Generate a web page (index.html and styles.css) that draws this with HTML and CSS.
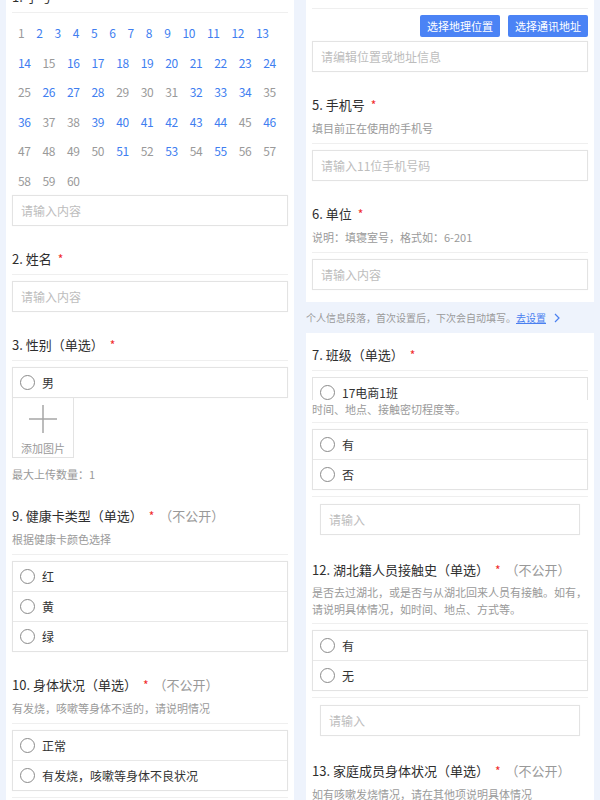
FILE: index.html
```html
<!DOCTYPE html>
<html lang="zh-CN">
<head>
<meta charset="utf-8">
<title>表单</title>
<link rel="stylesheet" href="styles.css">
</head>
<body>
<div class="page">
  <div class="col col-left">
    <div class="card card-left">
      <div class="q">
        <div class="q-head"><div class="q-title">1. 学号<span class="star">*</span></div></div>
        <div class="q-body">
          <div class="nums">
            <span class="g">1</span><span class="b">2</span><span class="b">3</span><span class="b">4</span><span class="b">5</span><span class="b">6</span><span class="b">7</span><span class="b">8</span><span class="b">9</span><span class="b">10</span><span class="b">11</span><span class="b">12</span><span class="b">13</span>
            <span class="b">14</span><span class="g">15</span><span class="b">16</span><span class="b">17</span><span class="b">18</span><span class="b">19</span><span class="b">20</span><span class="b">21</span><span class="b">22</span><span class="b">23</span><span class="b">24</span>
            <span class="g">25</span><span class="b">26</span><span class="b">27</span><span class="b">28</span><span class="g">29</span><span class="g">30</span><span class="g">31</span><span class="b">32</span><span class="b">33</span><span class="b">34</span><span class="g">35</span>
            <span class="b">36</span><span class="g">37</span><span class="g">38</span><span class="b">39</span><span class="b">40</span><span class="b">41</span><span class="b">42</span><span class="b">43</span><span class="b">44</span><span class="g">45</span><span class="b">46</span>
            <span class="g">47</span><span class="g">48</span><span class="g">49</span><span class="g">50</span><span class="b">51</span><span class="g">52</span><span class="b">53</span><span class="g">54</span><span class="b">55</span><span class="g">56</span><span class="g">57</span>
            <span class="g">58</span><span class="g">59</span><span class="g">60</span>
          </div>
          <div class="input">请输入内容</div>
        </div>
      </div>

      <div class="q">
        <div class="q-head"><div class="q-title">2. 姓名<span class="star">*</span></div></div>
        <div class="q-body"><div class="input">请输入内容</div></div>
      </div>

      <div class="q">
        <div class="q-head"><div class="q-title">3. 性别（单选）<span class="star">*</span></div></div>
        <div class="q-body">
          <div class="opts">
            <div class="opt"><span class="radio"></span>男</div>
          </div>
          <div class="upload">
            <svg class="plus" width="28" height="28" viewBox="0 0 28 28"><path d="M14 0V28M0 14H28" stroke="#a6a6a6" stroke-width="1.5" fill="none"/></svg>
            <div class="upload-label">添加图片</div>
          </div>
          <div class="note">最大上传数量：1</div>
        </div>
      </div>

      <div class="q">
        <div class="q-head">
          <div class="q-title">9. 健康卡类型（单选）<span class="star">*</span><span class="private">（不公开）</span></div>
          <div class="desc">根据健康卡颜色选择</div>
        </div>
        <div class="q-body">
          <div class="opts">
            <div class="opt"><span class="radio"></span>红</div>
            <div class="opt"><span class="radio"></span>黄</div>
            <div class="opt"><span class="radio"></span>绿</div>
          </div>
        </div>
      </div>

      <div class="q">
        <div class="q-head">
          <div class="q-title">10. 身体状况（单选）<span class="star">*</span><span class="private">（不公开）</span></div>
          <div class="desc">有发烧，咳嗽等身体不适的，请说明情况</div>
        </div>
        <div class="q-body">
          <div class="opts">
            <div class="opt"><span class="radio"></span>正常</div>
            <div class="opt"><span class="radio"></span>有发烧，咳嗽等身体不良状况</div>
          </div>
          <div class="other"><div class="input">请输入</div></div>
        </div>
      </div>
    </div>
  </div>

  <div class="col col-right">
    <div class="card card-top">
      <div class="q">
        <div class="q-head"><div class="q-title">4. 住址<span class="star">*</span></div></div>
        <div class="q-body">
          <div class="btns">
            <div class="btn">选择地理位置</div>
            <div class="btn">选择通讯地址</div>
          </div>
          <div class="input">请编辑位置或地址信息</div>
        </div>
      </div>

      <div class="q">
        <div class="q-head">
          <div class="q-title">5. 手机号<span class="star">*</span></div>
          <div class="desc">填目前正在使用的手机号</div>
        </div>
        <div class="q-body"><div class="input">请输入11位手机号码</div></div>
      </div>

      <div class="q">
        <div class="q-head">
          <div class="q-title">6. 单位<span class="star">*</span></div>
          <div class="desc">说明：填寝室号，格式如：6-201</div>
        </div>
        <div class="q-body"><div class="input">请输入内容</div></div>
      </div>
    </div>

    <div class="tip">个人信息段落，首次设置后，下次会自动填写。<span class="tip-link">去设置</span><svg class="chev" width="6" height="10" viewBox="0 0 6 10"><path d="M1 1L5 5L1 9" stroke="#4a80f0" stroke-width="1.2" fill="none"/></svg></div>

    <div class="card card-bottom">
      <div class="q">
        <div class="q-head"><div class="q-title">7. 班级（单选）<span class="star">*</span></div></div>
        <div class="q-body">
          <div class="opts cut">
            <div class="opt"><span class="radio"></span>17电商1班</div>
          </div>
        </div>
      </div>

      <div class="q q-stitch">
        <div class="q-head"><div class="desc">时间、地点、接触密切程度等。</div></div>
        <div class="q-body">
          <div class="opts">
            <div class="opt"><span class="radio"></span>有</div>
            <div class="opt"><span class="radio"></span>否</div>
          </div>
          <div class="other"><div class="input">请输入</div></div>
        </div>
      </div>

      <div class="q">
        <div class="q-head">
          <div class="q-title">12. 湖北籍人员接触史（单选）<span class="star">*</span><span class="private">（不公开）</span></div>
          <div class="desc desc2">是否去过湖北，或是否与从湖北回来人员有接触。如有，<br>请说明具体情况，如时间、地点、方式等。</div>
        </div>
        <div class="q-body">
          <div class="opts">
            <div class="opt"><span class="radio"></span>有</div>
            <div class="opt"><span class="radio"></span>无</div>
          </div>
          <div class="other"><div class="input">请输入</div></div>
        </div>
      </div>

      <div class="q">
        <div class="q-head">
          <div class="q-title">13. 家庭成员身体状况（单选）<span class="star">*</span><span class="private">（不公开）</span></div>
          <div class="desc">如有咳嗽发烧情况，请在其他项说明具体情况</div>
        </div>
        <div class="q-body">
          <div class="opts">
            <div class="opt"><span class="radio"></span>正常</div>
          </div>
        </div>
      </div>
    </div>
  </div>
</div>
</body>
</html>
```

FILE: styles.css
```css
* { box-sizing: border-box; }
html, body { margin: 0; padding: 0; }
body {
  width: 600px;
  height: 800px;
  overflow: hidden;
  background: #eef3fc;
  font-family: "Noto Sans CJK SC", "Noto Sans", sans-serif;
  color: #333;
}
.page { display: flex; height: 800px; }
.col {
  width: 300px;
  height: 800px;
  overflow: hidden;
  padding: 0 6px;
  display: flex;
  flex-direction: column;
}
.card { background: #fff; padding: 0 6px; flex-shrink: 0; }
.card-left { margin-top: -13px; flex-grow: 1; }
.card-top { margin-top: -17px; padding-bottom: 12px; }
.card-bottom { padding-top: 12px; flex-grow: 1; }

.q + .q { margin-top: 23px; }
.q.q-stitch { margin-top: 0; }
.q-head { padding-bottom: 5px; border-bottom: 1px solid #efefef; }
.q-title {
  font-size: 13px;
  line-height: 20px;
  color: #2e2e2e;
  white-space: nowrap;
}
.star {
  color: #f02b2b;
  font-size: 12px;
  line-height: 20px;
  vertical-align: top;
  margin: 0 5px 0 6px;
}
.private { color: #999; }
.desc {
  font-size: 11px;
  line-height: 17px;
  color: #9a9a9a;
  margin-top: 5px;
  margin-bottom: 1px;
  white-space: nowrap;
}
.desc2 { margin-top: 4px; margin-bottom: 0; }
.q-stitch .q-head { padding-bottom: 4px; }
.q-stitch .desc { margin-top: 1px; margin-bottom: 0; }
.q-body { padding-top: 6px; }

.nums {
  display: flex;
  flex-wrap: wrap;
  column-gap: 12px;
  padding-left: 6px;
  margin: -1px -4px 0 0;
  font-size: 12px;
  line-height: 29.5px;
  letter-spacing: -0.4px;
}
.nums .b { color: #407ef0; }
.nums .g { color: #9a9a9a; }

.input {
  height: 31px;
  border: 1px solid #e3e3e3;
  padding: 0 8px;
  font-size: 12px;
  color: #bdbdbd;
  display: flex;
  align-items: center;
  box-shadow: 0 0 1px rgba(0, 0, 0, 0.06);
  white-space: nowrap;
}
.btns { display: flex; justify-content: flex-end; gap: 8px; }
.btn {
  width: 80px;
  height: 22px;
  background: #4b83f5;
  color: #fff;
  font-size: 11px;
  border-radius: 2px;
  display: flex;
  align-items: center;
  justify-content: center;
}
.btns + .input { margin-top: 4px; }

.opts { border: 1px solid #e3e3e3; box-shadow: 0 0 1px rgba(0, 0, 0, 0.05); }
.opt {
  height: 29px;
  display: flex;
  align-items: center;
  gap: 7px;
  padding-left: 7px;
  font-size: 12px;
  color: #333;
  white-space: nowrap;
}
.opt + .opt { height: 30px; border-top: 1px solid #e8e8e8; }
.radio {
  width: 15px;
  height: 15px;
  border: 1.3px solid #8a8a8a;
  border-radius: 50%;
  flex-shrink: 0;
}
.opts.cut { height: 23px; overflow: hidden; border-bottom: none; box-shadow: none; }

.upload {
  width: 62px;
  height: 60px;
  border: 1px solid #e3e3e3;
  border-top: none;
  display: flex;
  flex-direction: column;
  align-items: center;
}
.plus { display: block; margin-top: 7px; }
.upload-label { font-size: 11px; line-height: 14px; color: #9a9a9a; margin-top: 8px; }
.note { font-size: 11px; line-height: 17px; color: #9a9a9a; margin-top: 8px; }

.other { margin-top: 6px; border-top: 1px solid #efefef; padding: 7px 8px 2px; }

.tip {
  height: 31px;
  flex-shrink: 0;
  display: flex;
  align-items: center;
  font-size: 10px;
  color: #9a9a9a;
  white-space: nowrap;
}
.tip-link { color: #4a80f0; text-decoration: underline; }
.chev { display: block; margin-left: 8px; }
```
